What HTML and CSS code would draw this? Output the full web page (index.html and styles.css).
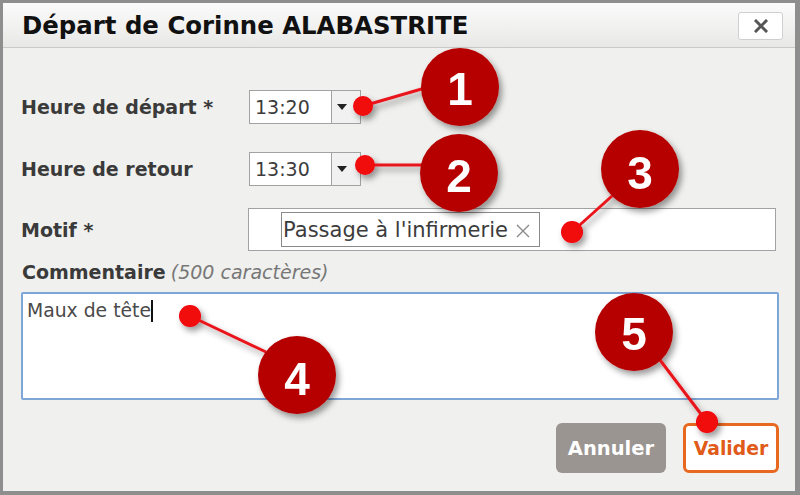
FILE: index.html
```html
<!DOCTYPE html>
<html lang="fr">
<head>
    <meta charset="UTF-8">
    <title>Départ de Corinne ALABASTRITE</title>
    <link rel="stylesheet" href="styles.css">
</head>
<body>

    <div class="dialog">
        <!-- Barre de titre -->
        <div class="titlebar">
            <h1>Départ de Corinne ALABASTRITE</h1>
            <button class="close-button" type="button" aria-label="Fermer">
                <svg width="14" height="14" viewBox="0 0 14 14">
                    <path d="M2 2 L12 12 M12 2 L2 12" stroke="#555" stroke-width="3" stroke-linecap="square"/>
                </svg>
            </button>
        </div>

        <!-- Formulaire -->
        <form class="form">
            <div class="row row-depart">
                <label class="label">Heure de départ *</label>
                <div class="time-input">
                    <span class="time-value">13:20</span>
                    <span class="time-arrow"></span>
                </div>
            </div>
            <div class="row row-retour">
                <label class="label">Heure de retour</label>
                <div class="time-input">
                    <span class="time-value">13:30</span>
                    <span class="time-arrow"></span>
                </div>
            </div>
            <div class="row row-motif">
                <label class="label">Motif *</label>
                <div class="tag-input">
                    <span class="tag">Passage à l'infirmerie
                        <svg class="tag-remove" width="14" height="14" viewBox="0 0 14 14">
                            <path d="M1 1 L13 13 M13 1 L1 13" stroke="#8a8a8a" stroke-width="1.4"/>
                        </svg>
                    </span>
                </div>
            </div>
            <div class="comment-label">
                <span class="label">Commentaire</span> <em class="hint">(500 caractères)</em>
            </div>
            <div class="textarea">Maux de tête<span class="caret"></span></div>

            <div class="actions">
                <button class="btn btn-cancel" type="button">Annuler</button>
                <button class="btn btn-ok" type="button">Valider</button>
            </div>
        </form>

        <!-- Annotations numérotées -->
        <svg class="callouts" width="800" height="495" viewBox="0 0 800 495">
            <defs>
                <filter id="shadow" x="-40%" y="-40%" width="180%" height="180%">
                    <feDropShadow dx="3" dy="4" stdDeviation="3" flood-color="#000" flood-opacity="0.4"/>
                </filter>
            </defs>
            <g filter="url(#shadow)">
                <line class="callout-line" x1="363" y1="106" x2="425" y2="88"/>
                <circle class="callout-dot" cx="363" cy="106" r="10"/>
                <circle class="callout-circle" cx="460" cy="87" r="39"/>
                <text class="callout-num" x="460" y="105">1</text>
            </g>
            <g filter="url(#shadow)">
                <line class="callout-line" x1="365" y1="165" x2="425" y2="165"/>
                <circle class="callout-dot" cx="365" cy="165" r="10"/>
                <circle class="callout-circle" cx="459" cy="173" r="39"/>
                <text class="callout-num" x="459" y="192">2</text>
            </g>
            <g filter="url(#shadow)">
                <line class="callout-line" x1="572" y1="232" x2="612" y2="196"/>
                <circle class="callout-dot" cx="572" cy="232" r="11"/>
                <circle class="callout-circle" cx="640" cy="169" r="39"/>
                <text class="callout-num" x="640" y="189">3</text>
            </g>
            <g filter="url(#shadow)">
                <line class="callout-line" x1="190" y1="316" x2="266" y2="352"/>
                <circle class="callout-dot" cx="190" cy="316" r="11"/>
                <circle class="callout-circle" cx="297" cy="375" r="39"/>
                <text class="callout-num" x="297" y="395">4</text>
            </g>
            <g filter="url(#shadow)">
                <line class="callout-line" x1="707" y1="422" x2="660" y2="360"/>
                <circle class="callout-dot" cx="707" cy="422" r="11"/>
                <circle class="callout-circle" cx="634" cy="332" r="39"/>
                <text class="callout-num" x="634" y="350">5</text>
            </g>
        </svg>
    </div>

</body>
</html>
```

FILE: styles.css
```css
/* Base */
body {
    margin: 0;
    background: #f0f0ee;
    font-family: "DejaVu Sans", Verdana, sans-serif;
    color: #333;
}

/* Fenêtre de dialogue */
.dialog {
    position: relative;
    width: 800px;
    height: 495px;
    box-sizing: border-box;
    border: 3px solid #8e8e8e;
    border-right-width: 5px;
    border-bottom-width: 4px;
    background: #f0f0ee;
    overflow: hidden;
}

/* Barre de titre */
.titlebar {
    height: 44px;
    display: flex;
    align-items: center;
    justify-content: space-between;
    padding: 0 12px 0 19px;
    background: linear-gradient(#fbfbfb, #e8e8e7);
    border-bottom: 1px solid #c9c9c9;
}

.titlebar h1 {
    margin: 0;
    font-size: 24.4px;
    font-weight: bold;
    color: #111;
    white-space: nowrap;
}

.close-button {
    width: 45px;
    height: 28px;
    margin-top: 2px;
    border: 1px solid #cfcfcf;
    border-radius: 3px;
    background: #fff;
    padding: 0;
    display: flex;
    align-items: center;
    justify-content: center;
}

/* Formulaire */
.form {
    padding: 42px 19px 0 18px;
    display: flex;
    flex-direction: column;
}

.row {
    display: flex;
    align-items: center;
}

.row-retour {
    margin-top: 28px;
}

.row-motif {
    margin-top: 22px;
}

.label {
    width: 228px;
    font-size: 19px;
    font-weight: bold;
    color: #3a3a3a;
}

/* Champ horaire */
.time-input {
    display: flex;
    height: 34px;
    box-sizing: border-box;
    border: 1px solid #a2a2a2;
    background: #fff;
}

.time-value {
    width: 81px;
    padding-left: 5px;
    box-sizing: border-box;
    font-size: 19px;
    line-height: 32px;
    color: #3c3c3c;
}

.time-arrow {
    width: 28px;
    border-left: 1px solid #a2a2a2;
    background: #f1f1f1;
    display: flex;
    align-items: center;
    justify-content: center;
}

.time-arrow::before {
    content: "";
    border-left: 5px solid transparent;
    border-right: 5px solid transparent;
    border-top: 6px solid #222;
    margin-left: -8px;
}

/* Champ motif avec étiquette */
.tag-input {
    width: 530px;
    height: 43px;
    box-sizing: border-box;
    border: 1px solid #a2a2a2;
    background: #fff;
    display: flex;
    align-items: center;
    padding-left: 32px;
}

.tag {
    display: flex;
    align-items: center;
    gap: 8px;
    height: 35px;
    box-sizing: border-box;
    border: 1px solid #8a8a8a;
    padding: 0 9px 0 1px;
    font-size: 21px;
    color: #3c3c3c;
}

.tag-remove {
    margin-top: 2px;
}

/* Commentaire */
.comment-label {
    margin-top: 10px;
    height: 22px;
    line-height: 22px;
    padding-left: 1px;
}

.hint {
    font-size: 19px;
    color: #777;
}

.textarea {
    margin-top: 9px;
    height: 108px;
    width: 758px;
    box-sizing: border-box;
    border: 2px solid #7ea6d6;
    border-radius: 2px;
    background: #fff;
    padding: 6px 4px;
    font-size: 18.8px;
    color: #4a4a4a;
    line-height: 22px;
}

.caret {
    display: inline-block;
    width: 2px;
    height: 22px;
    background: #111;
    vertical-align: top;
}

/* Boutons */
.actions {
    margin-top: 23px;
    display: flex;
    justify-content: flex-end;
    gap: 17px;
    width: 758px;
}

.btn {
    height: 50px;
    border-radius: 6px;
    font-family: "DejaVu Sans", sans-serif;
    font-size: 19.5px;
    font-weight: bold;
    padding: 0;
}

.btn-cancel {
    width: 110px;
    border: none;
    background: #9a9591;
    color: #fff;
}

.btn-ok {
    width: 96px;
    border: 3px solid #e8681f;
    background: #fff;
    color: #e05a1a;
    font-size: 18.8px;
}

/* Annotations */
.callouts {
    position: absolute;
    top: -3px;
    left: -3px;
    pointer-events: none;
}

.callout-line {
    stroke: #e8141a;
    stroke-width: 3;
}

.callout-dot {
    fill: #f2070f;
}

.callout-circle {
    fill: #b60000;
}

.callout-num {
    fill: #fff;
    font-family: "Liberation Sans", Arial, sans-serif;
    font-size: 46px;
    font-weight: bold;
    text-anchor: middle;
}
```
